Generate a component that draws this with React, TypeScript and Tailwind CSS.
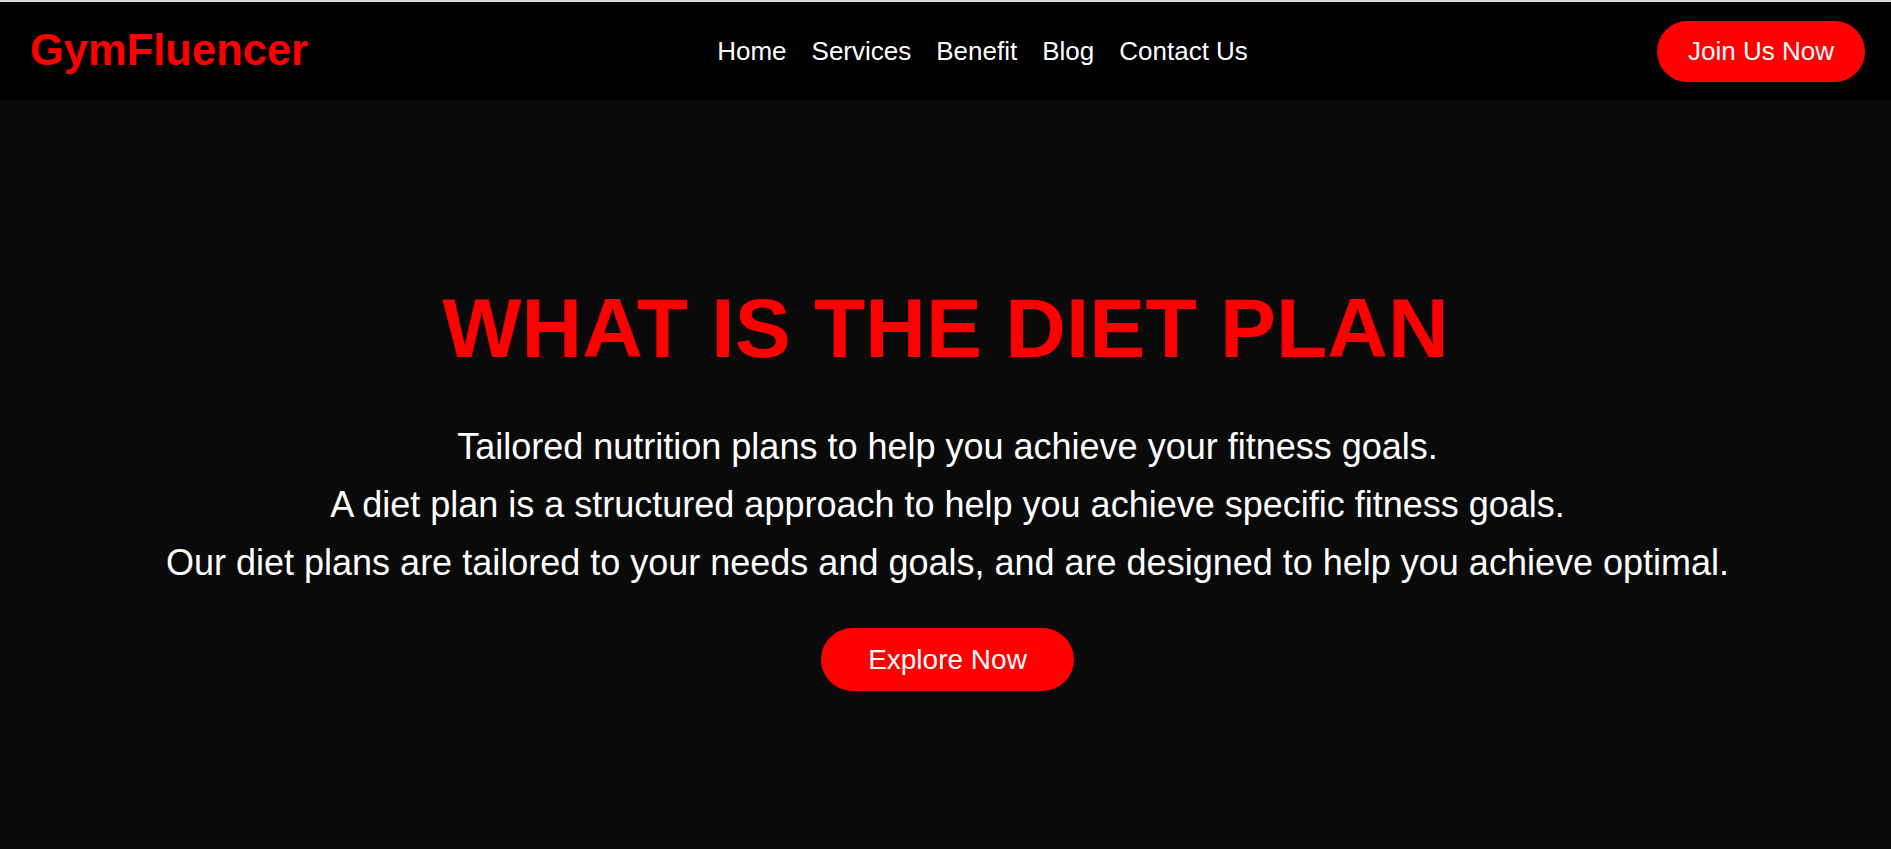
const links = ["Home", "Services", "Benefit", "Blog", "Contact Us"];

export default function App() {
  return (
    <div
      className="min-h-[849px] bg-[#0a0a0a] text-white"
      style={{ fontFamily: '"Liberation Sans", Arial, sans-serif' }}
    >
      <header className="flex h-[100px] items-center justify-between border-t-2 border-[#dcdcdc] bg-black pl-[30px] pr-[26px]">
        <div className="text-[43.5px] font-bold leading-none text-[#ff0000]">
          GymFluencer
        </div>
        <nav className="flex items-center gap-[25px] text-[26px] leading-none">
          {links.map((l) => (
            <a key={l} href="#" className="text-white">
              {l}
            </a>
          ))}
        </nav>
        <button className="flex h-[61px] items-center rounded-full bg-[#ff0000] px-[31px] text-[26px] text-white">
          Join Us Now
        </button>
      </header>

      <section className="flex flex-col items-center pt-[186px] text-center">
        <h1 className="text-[84px] font-bold leading-none text-[#ff0000]">
          WHAT IS THE DIET PLAN
        </h1>
        <div className="mt-[48px] pl-[4px] text-[36px] leading-[58px]">
          <p>Tailored nutrition plans to help you achieve your fitness goals.</p>
          <p>A diet plan is a structured approach to help you achieve specific fitness goals.</p>
          <p>
            Our diet plans are tailored to your needs and goals, and are designed to help you
            achieve optimal.
          </p>
        </div>
        <button className="mt-[36px] ml-[4px] flex h-[63px] items-center rounded-full bg-[#ff0000] px-[47px] text-[28px] text-white">
          Explore Now
        </button>
      </section>
    </div>
  );
}
